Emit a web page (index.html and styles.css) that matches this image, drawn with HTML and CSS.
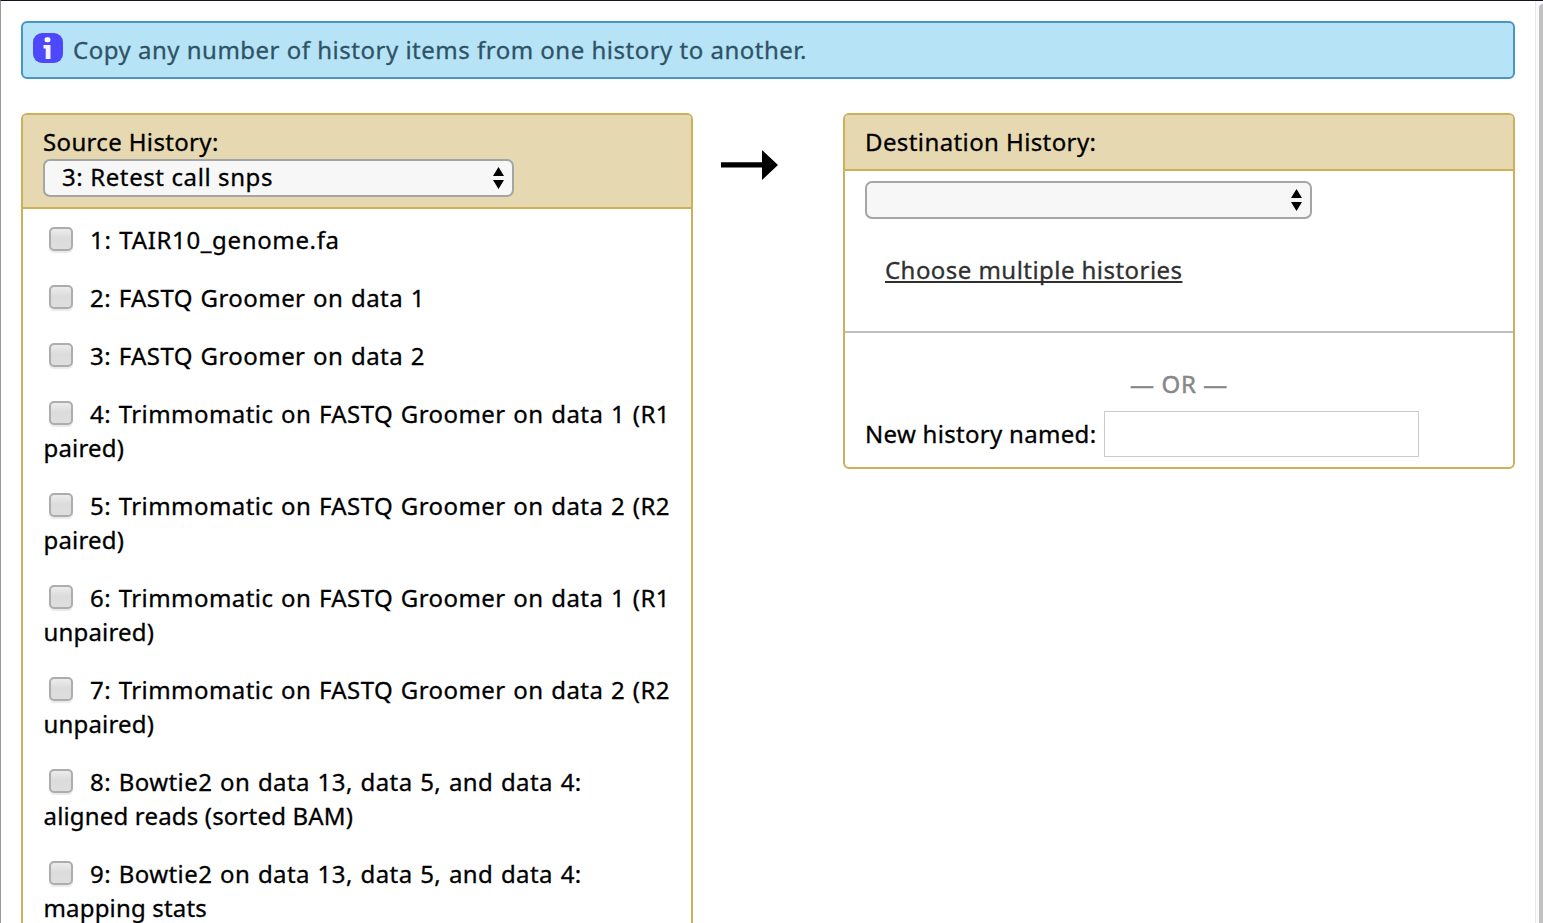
FILE: index.html
```
<!DOCTYPE html>
<html lang="en">
<head>
<meta charset="utf-8">
<title>Copy History Items</title>
<link rel="stylesheet" href="styles.css">
</head>
<body>
<div class="page">
  <main class="content">
    <div class="info">
      <svg class="info-icon" width="30" height="30" viewBox="0 0 30 30"><rect width="30" height="30" rx="9" fill="#4d48fb"/><rect x="11.500" y="4.300" width="6" height="5" rx="2.300" fill="#fff"/><path d="M10.500 12h7v14H12.700V15.500h-2.200z" fill="#f4f3ff"/></svg>
      <span class="t-info">Copy any number of history items from one history to another.</span>
    </div>
    <div class="columns">
      <section class="panel source">
        <header class="panel-head">
          <div class="t-source">Source History:</div>
          <div class="select select-source"><span class="t-select">3: Retest call snps</span><svg class="arrows" width="11" height="22" viewBox="0 0 11 22"><path d="M5.500 0L11 9H0zM0 13h11L5.500 22z"/></svg></div>
        </header>
        <div class="items">
          <div class="item"><span class="check"></span><span class="t-1">1: TAIR10_genome.fa</span></div>
          <div class="item"><span class="check"></span><span class="t-line">2: FASTQ Groomer on data 1</span></div>
          <div class="item"><span class="check"></span><span class="t-line">3: FASTQ Groomer on data 2</span></div>
          <div class="item"><span class="check"></span><span class="t-line">4: Trimmomatic on FASTQ Groomer on data 1 (R1</span><br><span class="t-wrap">paired)</span></div>
          <div class="item"><span class="check"></span><span class="t-line">5: Trimmomatic on FASTQ Groomer on data 2 (R2</span><br><span class="t-wrap">paired)</span></div>
          <div class="item"><span class="check"></span><span class="t-line">6: Trimmomatic on FASTQ Groomer on data 1 (R1</span><br><span class="t-wrap">unpaired)</span></div>
          <div class="item"><span class="check"></span><span class="t-line">7: Trimmomatic on FASTQ Groomer on data 2 (R2</span><br><span class="t-wrap">unpaired)</span></div>
          <div class="item"><span class="check"></span><span class="t-line">8: Bowtie2 on data 13, data 5, and data 4:</span><br><span class="t-wrap">aligned reads (sorted BAM)</span></div>
          <div class="item"><span class="check"></span><span class="t-line">9: Bowtie2 on data 13, data 5, and data 4:</span><br><span class="t-wrap">mapping stats</span></div>
        </div>
      </section>
      <div class="arrow"><svg width="57" height="30" viewBox="0 0 57 30"><path d="M0 12.300h41V0l16 15-16 15V17.500H0z"/></svg></div>
      <section class="panel dest">
        <header class="panel-head"><div class="t-dest">Destination History:</div></header>
        <div class="dest-top">
          <div class="select select-dest"><svg class="arrows" width="11" height="22" viewBox="0 0 11 22"><path d="M5.500 0L11 9H0zM0 13h11L5.500 22z"/></svg></div>
          <a class="choose">Choose multiple histories</a>
        </div>
        <div class="dest-new">
          <div class="or">— OR —</div>
          <div class="new-row"><span class="t-new">New history named:</span><input class="name-input" type="text"></div>
        </div>
      </section>
    </div>
  </main>
  <div class="scrollbar"><div class="thumb"></div></div>
</div>
</body>
</html>
```

FILE: styles.css
```
* { box-sizing: border-box; }
body {
  margin: 0;
  overflow: hidden;
  background: #fff;
  color: #000;
  font: 24px/34px "Noto Sans", "Open Sans", sans-serif;
  letter-spacing: 0.4px;
  white-space: nowrap;
  -webkit-text-stroke: 0.3px currentColor;
}
.page {
  display: flex;
  height: 923px;
  overflow: hidden;
  border-top: 1px solid #15131f;
  border-left: 1px solid #999;
}
.content { flex: 1; padding: 20px 20px 0; }
.info {
  display: flex;
  gap: 10px;
  height: 58px;
  padding: 10px;
  border: 2px solid #4796c4;
  border-radius: 6px;
  background: #b6e3f6;
  color: #2f5365;
}
.t-info { letter-spacing: 0.5px; }
.t-source { letter-spacing: 0.35px; }
.t-select { letter-spacing: 0.6px; }
.t-1 { letter-spacing: 0.65px; word-spacing: 1px; }
.t-line { letter-spacing: 0.43px; word-spacing: 1px; }
.t-wrap { letter-spacing: 0.17px; margin-left: -0.5px; }
.columns { display: flex; align-items: flex-start; margin-top: 34px; }
.panel { width: 672px; border: 2px solid #ceb05b; border-radius: 6px; }
.panel-head {
  padding: 10px 20px;
  border-bottom: 2px solid #ceb05b;
  border-radius: 4px 4px 0 0;
  background: #e6d8b1;
}
.select {
  display: flex;
  justify-content: space-between;
  height: 38px;
  padding: 0 8px 0 17px;
  border: 2px solid #a5a5a5;
  border-radius: 7px;
  background: #f7f7f7;
  line-height: 32px;
}
.select-source { width: 471px; }
.select-dest { width: 447px; }
.arrows { margin: 6px 0 0 auto; }
.items { padding: 2px 20px 0 21px; }
.item { padding: 12px 0; }
.check {
  display: inline-block;
  width: 24px;
  height: 24px;
  margin: 0 17px 0 5px;
  border: 2px solid #adadad;
  border-radius: 5px;
  background: linear-gradient(#ececec, #dcdcdc 45%, #dedede);
  box-shadow: 0 2px 1px #e9e9e9;
  vertical-align: -2px;
}
.arrow { display: flex; width: 150px; padding: 37px 0 0 28px; }
.dest-top { height: 162px; padding: 10px 20px 0; border-bottom: 2px solid #bfbfbf; }
.choose {
  display: inline-block;
  margin: 34px 0 0 20px;
  color: #303030;
  letter-spacing: 0.45px;
  text-decoration: underline;
  text-decoration-thickness: 2px;
  text-underline-offset: 2px;
  text-decoration-skip-ink: none;
}
.dest-new { padding: 34px 20px 10px; }
.or { color: #888; text-align: center; letter-spacing: 0.6px; -webkit-text-stroke-width: 0.5px; }
.new-row { display: flex; align-items: center; gap: 8px; margin-top: 10px; }
.t-new { width: 231px; letter-spacing: 0.3px; }
.name-input { width: 315px; height: 46px; padding: 0; border: 1px solid #ccc; background: #fff; }
.scrollbar { width: 8px; padding: 3px 0 0 3px; border-left: 1px solid #e7e7e7; background: #fafafa; }
.thumb { height: 930px; border-radius: 4px 0 0 0; background: #c1c1c1; }
```
